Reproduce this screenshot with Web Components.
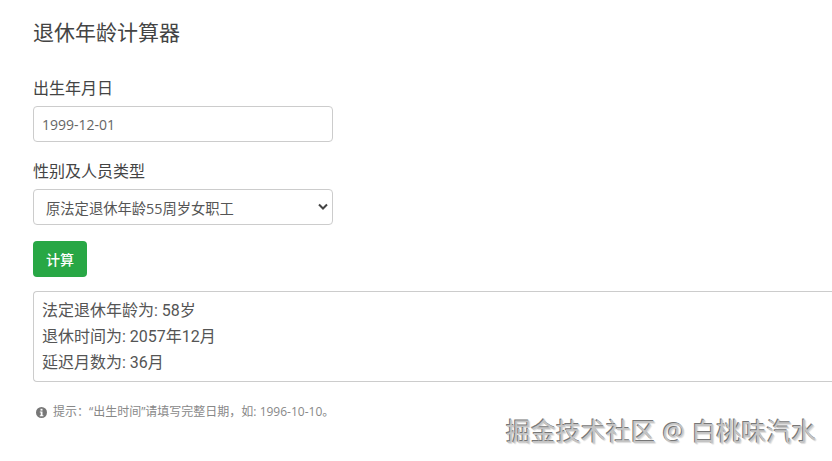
<!DOCTYPE html>
<html lang="zh">
<head>
<meta charset="utf-8">
<title>退休年龄计算器</title>
<style>
  html, body { margin: 0; height: 100%; overflow: hidden; background: #fff; }
  body { font-family: "Open Sans", "Noto Sans CJK SC", sans-serif; color: #444; }
</style>
</head>
<body>
<retire-calculator>
  <form-field label="出生年月日">
    <input-box value="1999-12-01"></input-box>
  </form-field>
  <form-field label="性别及人员类型">
    <select-box value="原法定退休年龄55周岁女职工"></select-box>
  </form-field>
  <green-button>计算</green-button>
  <result-box>
    <div>法定退休年龄为: 58岁</div>
    <div>退休时间为: 2057年12月</div>
    <div>延迟月数为: 36月</div>
  </result-box>
  <hint-text>提示：“出生时间”请填写完整日期，如: 1996-10-10。</hint-text>
</retire-calculator>
<water-mark>掘金技术社区 @ 白桃味汽水</water-mark>

<script>
class RetireCalculator extends HTMLElement {
  constructor() {
    super();
    this.attachShadow({ mode: 'open' });
    this.shadowRoot.innerHTML = `
      <style>
        :host { display: block; box-sizing: border-box; width: 832px; padding: 20px 0 0 33px; overflow: hidden; }
        h1 {
          margin: 0 0 31px;
          font-size: 21px;
          line-height: 25px;
          font-weight: 400;
          color: #444;
        }
      </style>
      <h1>退休年龄计算器</h1>
      <slot></slot>
    `;
  }
}

class FormField extends HTMLElement {
  constructor() {
    super();
    this.attachShadow({ mode: 'open' });
    this.shadowRoot.innerHTML = `
      <style>
        :host { display: block; margin-bottom: 16px; }
        :host(:first-child) { margin-bottom: 17px; }
        label {
          display: block;
          margin-bottom: 6px;
          font-size: 16px;
          line-height: 24px;
          color: #444;
        }
      </style>
      <label>${this.getAttribute('label') || ''}</label>
      <slot></slot>
    `;
  }
}

class InputBox extends HTMLElement {
  constructor() {
    super();
    this.attachShadow({ mode: 'open' });
    this.shadowRoot.innerHTML = `
      <style>
        :host {
          display: block;
          box-sizing: border-box;
          width: 300px;
          height: 36px;
          padding: 0 8px;
          border: 1px solid #ccc;
          border-radius: 4px;
          font-size: 14px;
          line-height: 35px;
          color: #666;
          background: #fff;
        }
      </style>
      ${this.getAttribute('value') || ''}
    `;
  }
}

class SelectBox extends HTMLElement {
  constructor() {
    super();
    this.attachShadow({ mode: 'open' });
    this.shadowRoot.innerHTML = `
      <style>
        :host {
          display: flex;
          align-items: center;
          justify-content: space-between;
          box-sizing: border-box;
          width: 300px;
          height: 36px;
          padding: 0 4px 0 12px;
          border: 1px solid #ccc;
          border-radius: 4px;
          font-size: 14.3px;
          color: #555;
          background: #fff;
        }
        svg { width: 10px; height: 7px; margin-bottom: 2px; }
      </style>
      <span>${this.getAttribute('value') || ''}</span>
      <svg viewBox="0 0 10 7"><path d="M1 1.5l4 4 4-4" fill="none" stroke="#444" stroke-width="2"/></svg>
    `;
  }
}

class GreenButton extends HTMLElement {
  constructor() {
    super();
    this.attachShadow({ mode: 'open' });
    this.shadowRoot.innerHTML = `
      <style>
        :host {
          display: flex;
          align-items: center;
          justify-content: center;
          width: 54px;
          height: 36px;
          margin-bottom: 14px;
          border-radius: 4px;
          background: #28a745;
          color: #fff;
          font-size: 14px;
          font-weight: 500;
        }
      </style>
      <slot></slot>
    `;
  }
}

class ResultBox extends HTMLElement {
  constructor() {
    super();
    this.attachShadow({ mode: 'open' });
    this.shadowRoot.innerHTML = `
      <style>
        :host {
          display: block;
          box-sizing: border-box;
          width: 830px;
          height: 91px;
          padding: 6px 8px;
          border: 1px solid #ccc;
          border-right: 0;
          border-radius: 4px 0 0 4px;
          font-family: Roboto, "Noto Sans CJK SC", sans-serif;
          font-size: 16px;
          line-height: 26px;
          color: #555;
        }
      </style>
      <slot></slot>
    `;
  }
}

class HintText extends HTMLElement {
  constructor() {
    super();
    this.attachShadow({ mode: 'open' });
    this.shadowRoot.innerHTML = `
      <style>
        :host {
          display: flex;
          align-items: center;
          gap: 6px;
          margin: 21px 0 0 3px;
          font-size: 12px;
          line-height: 18px;
          color: #888;
        }
        svg { width: 11px; height: 11px; flex: none; }
      </style>
      <svg viewBox="0 0 11 11">
        <circle cx="5.5" cy="5.5" r="5.5" fill="#777"/>
        <rect x="4.5" y="1.8" width="2" height="1.8" fill="#fff"/>
        <path d="M3.8 4.6h2.7v3.6h.9v1H3.8v-1h.9V5.6h-.9z" fill="#fff"/>
      </svg>
      <slot></slot>
    `;
  }
}

class WaterMark extends HTMLElement {
  constructor() {
    super();
    this.attachShadow({ mode: 'open' });
    this.shadowRoot.innerHTML = `
      <style>
        :host {
          position: absolute;
          left: 506px;
          top: 414px;
          font-size: 25px;
          line-height: 34px;
          white-space: nowrap;
          color: #c4c4c4;
          text-shadow: -1px -1px 0 #777, 1px 1px 1px #ddd;
        }
      </style>
      <slot></slot>
    `;
  }
}

customElements.define('retire-calculator', RetireCalculator);
customElements.define('form-field', FormField);
customElements.define('input-box', InputBox);
customElements.define('select-box', SelectBox);
customElements.define('green-button', GreenButton);
customElements.define('result-box', ResultBox);
customElements.define('hint-text', HintText);
customElements.define('water-mark', WaterMark);
</script>
</body>
</html>
